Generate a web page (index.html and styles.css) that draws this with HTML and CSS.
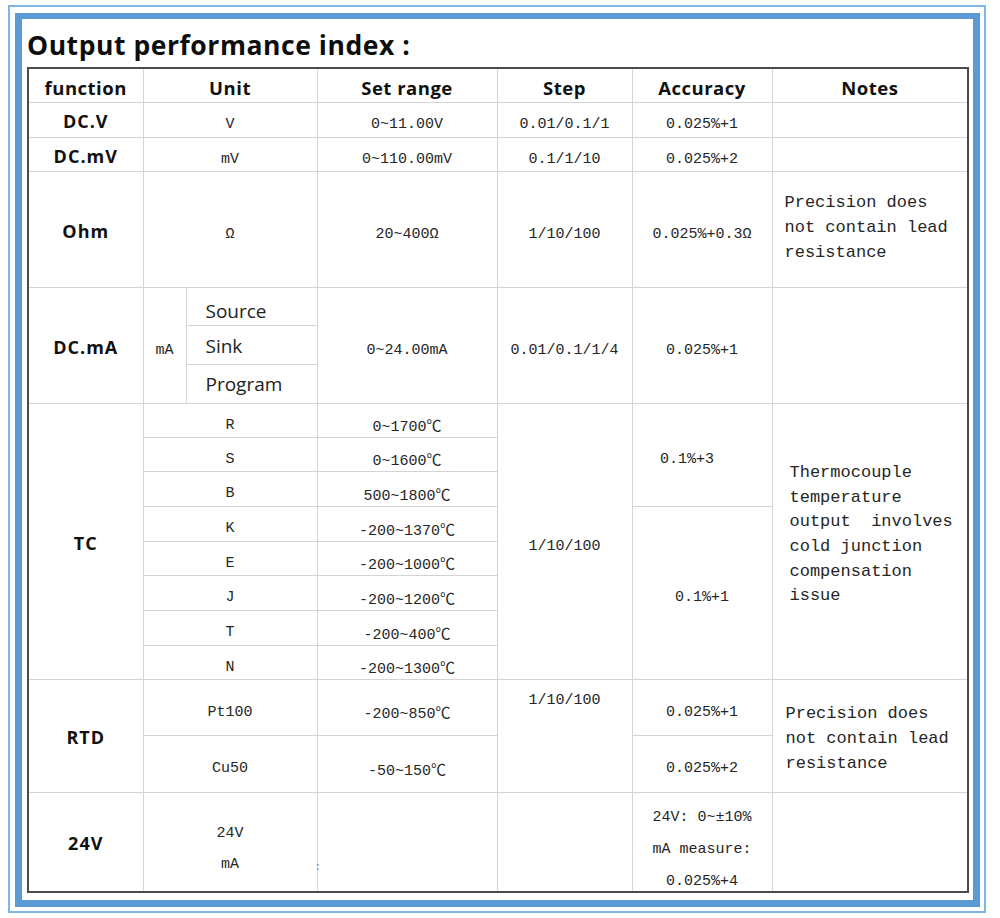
FILE: index.html
```html
<!DOCTYPE html>
<html lang="en">
<head>
<meta charset="utf-8">
<title>Output performance index</title>
<link rel="stylesheet" href="styles.css">
</head>
<body>
<div class="frame">
  <div class="panel">
    <h1 class="title">Output performance index :</h1>
    <table class="spec">
      <colgroup>
        <col class="c-fn"><col class="c-ua"><col class="c-ub"><col class="c-set"><col class="c-step"><col class="c-acc"><col class="c-notes">
      </colgroup>
      <thead>
        <tr class="h-head">
          <th class="hd">function</th>
          <th class="hd" colspan="2">Unit</th>
          <th class="hd">Set range</th>
          <th class="hd">Step</th>
          <th class="hd">Accuracy</th>
          <th class="hd">Notes</th>
        </tr>
      </thead>
      <tbody>
        <tr class="h-35">
          <th class="fn">DC.V</th>
          <td class="d" colspan="2">V</td>
          <td class="d">0~11.00V</td>
          <td class="d">0.01/0.1/1</td>
          <td class="d">0.025%+1</td>
          <td class="note"></td>
        </tr>
        <tr class="h-34">
          <th class="fn">DC.mV</th>
          <td class="d" colspan="2">mV</td>
          <td class="d">0~110.00mV</td>
          <td class="d">0.1/1/10</td>
          <td class="d">0.025%+2</td>
          <td class="note"></td>
        </tr>
        <tr class="h-116">
          <th class="fn">Ohm</th>
          <td class="d" colspan="2">Ω</td>
          <td class="d">20~400Ω</td>
          <td class="d">1/10/100</td>
          <td class="d">0.025%+0.3Ω</td>
          <td class="note note-ohm">Precision does<br>not contain lead<br>resistance</td>
        </tr>
        <tr class="h-38">
          <th class="fn" rowspan="3">DC.mA</th>
          <td class="d" rowspan="3">mA</td>
          <td class="mode mode-source">Source</td>
          <td class="d" rowspan="3">0~24.00mA</td>
          <td class="d" rowspan="3">0.01/0.1/1/4</td>
          <td class="d" rowspan="3">0.025%+1</td>
          <td class="note" rowspan="3"></td>
        </tr>
        <tr class="h-39"><td class="mode mode-sink">Sink</td></tr>
        <tr class="h-39"><td class="mode mode-program">Program</td></tr>
        <tr class="h-34">
          <th class="fn" rowspan="8">TC</th>
          <td class="d" colspan="2">R</td>
          <td class="d">0~1700℃</td>
          <td class="d" rowspan="8">1/10/100</td>
          <td class="d acc-tc" rowspan="3">0.1%+3</td>
          <td class="note note-tc" rowspan="8">Thermocouple<br>temperature<br>output&nbsp; involves<br>cold junction<br>compensation<br>issue</td>
        </tr>
        <tr class="h-34"><td class="d" colspan="2">S</td><td class="d">0~1600℃</td></tr>
        <tr class="h-35"><td class="d" colspan="2">B</td><td class="d">500~1800℃</td></tr>
        <tr class="h-35">
          <td class="d" colspan="2">K</td>
          <td class="d">-200~1370℃</td>
          <td class="d" rowspan="5">0.1%+1</td>
        </tr>
        <tr class="h-34"><td class="d" colspan="2">E</td><td class="d">-200~1000℃</td></tr>
        <tr class="h-35"><td class="d" colspan="2">J</td><td class="d">-200~1200℃</td></tr>
        <tr class="h-35"><td class="d" colspan="2">T</td><td class="d">-200~400℃</td></tr>
        <tr class="h-34"><td class="d" colspan="2">N</td><td class="d">-200~1300℃</td></tr>
        <tr class="h-56">
          <th class="fn" rowspan="2">RTD</th>
          <td class="d" colspan="2">Pt100</td>
          <td class="d">-200~850℃</td>
          <td class="d step-top" rowspan="2">1/10/100</td>
          <td class="d">0.025%+1</td>
          <td class="note note-rtd" rowspan="2">Precision does<br>not contain lead<br>resistance</td>
        </tr>
        <tr class="h-57">
          <td class="d" colspan="2">Cu50</td>
          <td class="d">-50~150℃</td>
          <td class="d">0.025%+2</td>
        </tr>
        <tr class="h-100">
          <th class="fn">24V</th>
          <td class="d stack" colspan="2">24V<br>mA</td>
          <td class="stray"><span class="stray-mark">:</span></td>
          <td class="d"></td>
          <td class="d acc-24"><div class="acc-lines">24V: 0~±10%<br>mA measure:<br>0.025%+4</div></td>
          <td class="note"></td>
        </tr>
      </tbody>
    </table>
  </div>
</div>
</body>
</html>
```

FILE: styles.css
```css
html, body {
  margin: 0;
  padding: 0;
  background: #ffffff;
}

.frame {
  box-sizing: border-box;
  width: 978px;
  height: 908px;
  margin: 5px 0 0 8px;
  border: 2px solid #80b6e5;
  padding: 6px 4px 4px 5px;
}

.panel {
  box-sizing: border-box;
  height: 100%;
  border: 7px solid #5b9bd5;
  border-top-width: 6px;
  padding: 0 6px 0 5px;
  background: #ffffff;
}

.title {
  margin: 0;
  height: 48px;
  box-sizing: border-box;
  padding: 11px 0 0 0;
  font-family: "Open Sans", "Noto Sans", sans-serif;
  font-weight: 700;
  font-size: 26.5px;
  letter-spacing: 0.55px;
  line-height: 30px;
  color: #0d0d0d;
}

.spec {
  width: 940px;
  table-layout: fixed;
  border-collapse: collapse;
  border: 2px solid #4a4a4a;
}

.c-fn { width: 115px; }
.c-ua { width: 43px; }
.c-ub { width: 131px; }
.c-set { width: 180px; }
.c-step { width: 135px; }
.c-acc { width: 140px; }
.c-notes { width: 196px; }

.spec th,
.spec td {
  border: 1px solid #d4d4d4;
  padding: 0;
  text-align: center;
  vertical-align: middle;
}

.h-head { height: 34px; }
.h-34 { height: 34px; }
.h-35 { height: 35px; }
.h-38 { height: 38px; }
.h-39 { height: 39px; }
.h-56 { height: 56px; }
.h-57 { height: 57px; }
.h-100 { height: 100px; }
.h-116 { height: 116px; }

.hd {
  font-family: "Open Sans", "Noto Sans", sans-serif;
  font-weight: 700;
  font-size: 18.5px;
  letter-spacing: 0.5px;
  color: #111111;
  padding-top: 4px !important;
}

.fn {
  font-family: "Open Sans", "Noto Sans", sans-serif;
  font-weight: 700;
  font-size: 18px;
  letter-spacing: 1px;
  color: #111111;
  padding-top: 3px !important;
}

.d {
  font-family: "Liberation Mono", "Noto Sans CJK SC", monospace;
  font-size: 15px;
  color: #262626;
  padding-top: 10px !important;
}

.mode {
  font-family: "Open Sans", "Noto Sans", sans-serif;
  font-size: 19px;
  color: #222222;
  text-align: left !important;
  padding-left: 19px !important;
}

.mode-source { padding-top: 10px !important; }
.mode-sink { padding-top: 3px !important; }
.mode-program { padding-top: 0 !important; }

.acc-tc {
  padding-right: 30px !important;
}

.step-top {
  vertical-align: top !important;
  padding-top: 12px !important;
}

.stack {
  line-height: 31px;
  padding-top: 14px !important;
}

.acc-24 {
  vertical-align: top !important;
  padding-top: 0 !important;
}

.acc-lines {
  box-sizing: border-box;
  height: 92px;
  padding-top: 9px;
  line-height: 32px;
}

.note {
  font-family: "Liberation Mono", "Noto Sans CJK SC", monospace;
  font-size: 17px;
  line-height: 25px;
  color: #262626;
  text-align: left !important;
}

.note-ohm {
  padding-left: 12px !important;
  padding-bottom: 3px !important;
}

.note-tc {
  padding-left: 17px !important;
  padding-bottom: 12px !important;
  line-height: 24.7px;
}

.note-rtd {
  padding-left: 13px !important;
  vertical-align: top !important;
  padding-top: 21px !important;
}

.stray {
  text-align: left !important;
  vertical-align: top !important;
  padding-top: 63px !important;
}

.stray-mark {
  font-family: "Liberation Mono", monospace;
  font-size: 11px;
  color: #777777;
  margin-left: -3px;
}
```
